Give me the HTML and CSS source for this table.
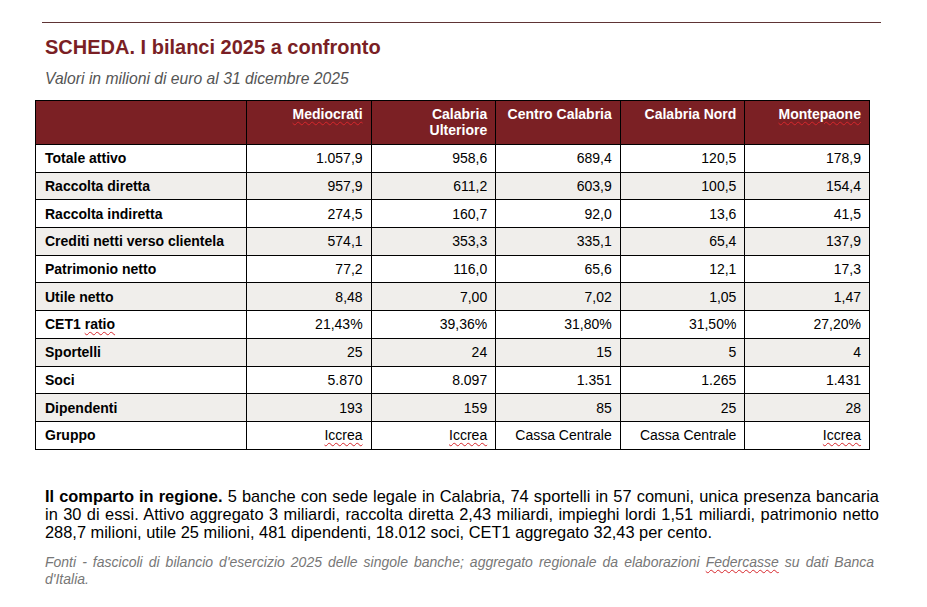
FILE: index.html
```html
<!DOCTYPE html>
<html lang="it">
<head>
<meta charset="utf-8">
<title>SCHEDA. I bilanci 2025 a confronto</title>
<link rel="stylesheet" href="styles.css">
</head>
<body>
<div class="page">
  <hr class="rule">
  <h1 class="title">SCHEDA. I bilanci 2025 a confronto</h1>
  <p class="subtitle">Valori in milioni di euro al 31 dicembre 2025</p>
  <table class="tbl">
    <colgroup>
      <col class="c-label">
      <col class="c-num"><col class="c-num"><col class="c-num"><col class="c-num"><col class="c-num">
    </colgroup>
    <thead>
      <tr>
        <th></th>
        <th><span class="sp">Mediocrati</span></th>
        <th>Calabria<br>Ulteriore</th>
        <th>Centro Calabria</th>
        <th>Calabria Nord</th>
        <th><span class="sp">Montepaone</span></th>
      </tr>
    </thead>
    <tbody>
      <tr><td>Totale attivo</td><td>1.057,9</td><td>958,6</td><td>689,4</td><td>120,5</td><td>178,9</td></tr>
      <tr><td>Raccolta diretta</td><td>957,9</td><td>611,2</td><td>603,9</td><td>100,5</td><td>154,4</td></tr>
      <tr><td>Raccolta indiretta</td><td>274,5</td><td>160,7</td><td>92,0</td><td>13,6</td><td>41,5</td></tr>
      <tr><td>Crediti netti verso clientela</td><td>574,1</td><td>353,3</td><td>335,1</td><td>65,4</td><td>137,9</td></tr>
      <tr><td>Patrimonio netto</td><td>77,2</td><td>116,0</td><td>65,6</td><td>12,1</td><td>17,3</td></tr>
      <tr><td>Utile netto</td><td>8,48</td><td>7,00</td><td>7,02</td><td>1,05</td><td>1,47</td></tr>
      <tr><td>CET1 <span class="sp">ratio</span></td><td>21,43%</td><td>39,36%</td><td>31,80%</td><td>31,50%</td><td>27,20%</td></tr>
      <tr><td>Sportelli</td><td>25</td><td>24</td><td>15</td><td>5</td><td>4</td></tr>
      <tr><td>Soci</td><td>5.870</td><td>8.097</td><td>1.351</td><td>1.265</td><td>1.431</td></tr>
      <tr><td>Dipendenti</td><td>193</td><td>159</td><td>85</td><td>25</td><td>28</td></tr>
      <tr><td>Gruppo</td><td><span class="sp">Iccrea</span></td><td><span class="sp">Iccrea</span></td><td>Cassa Centrale</td><td>Cassa Centrale</td><td><span class="sp">Iccrea</span></td></tr>
    </tbody>
  </table>
  <p class="summary"><b>Il comparto in regione.</b> 5 banche con sede legale in Calabria, 74 sportelli in 57 comuni, unica presenza bancaria in 30 di essi. Attivo aggregato 3 miliardi, raccolta diretta 2,43 miliardi, impieghi lordi 1,51 miliardi, patrimonio netto 288,7 milioni, utile 25 milioni, 481 dipendenti, 18.012 soci, CET1 aggregato 32,43 per cento.</p>
  <p class="sources">Fonti - fascicoli di bilancio d'esercizio 2025 delle singole banche; aggregato regionale da elaborazioni <span class="sp">Federcasse</span> su dati Banca d'Italia.</p>
</div>
</body>
</html>
```

FILE: styles.css
```css
html, body {
  margin: 0;
  padding: 0;
  background: #ffffff;
}

body {
  font-family: "Liberation Sans", Arial, sans-serif;
  color: #000;
}

.page {
  width: 846px;
  margin-left: 35px;
  padding-top: 22px;
}

.rule {
  margin: 0 0 0 7px;
  border: 0;
  height: 1px;
  background: #5e3435;
}

.title {
  margin: 13px 0 0 10px;
  font-size: 20px;
  line-height: 23px;
  font-weight: bold;
  color: #7a1f25;
}

.subtitle {
  margin: 11px 0 0 10px;
  font-size: 15.7px;
  line-height: 18px;
  font-style: italic;
  color: #555;
}

.tbl {
  margin-top: 12px;
  width: 834px;
  table-layout: fixed;
  border-collapse: collapse;
  font-size: 14px;
}

.c-label { width: 211px; }
.c-num { width: 124.6px; }

.tbl th,
.tbl td {
  border: 1px solid #000;
  padding: 0 8px 0 9px;
  text-align: right;
}

.tbl th {
  background: #7b2024;
  color: #fff;
  font-weight: bold;
  vertical-align: top;
  line-height: 16px;
  height: 38px;
  padding-top: 5px;
}

.tbl td {
  height: 26.7px;
  line-height: 16px;
  vertical-align: middle;
}

.tbl td:first-child {
  text-align: left;
  font-weight: bold;
}

.tbl tbody tr:nth-child(even) td {
  background: #f0eeeb;
}

.sp {
  text-decoration: underline wavy #d7262b;
  text-decoration-thickness: 1px;
  text-underline-offset: 2px;
}

.summary {
  margin: 37px 0 0 10px;
  width: 834px;
  font-size: 16.4px;
  line-height: 18.4px;
  text-align: justify;
}

.sources {
  margin: 12px 0 0 10px;
  width: 829px;
  font-size: 14px;
  line-height: 17.3px;
  font-style: italic;
  color: #777;
  text-align: justify;
}
```
